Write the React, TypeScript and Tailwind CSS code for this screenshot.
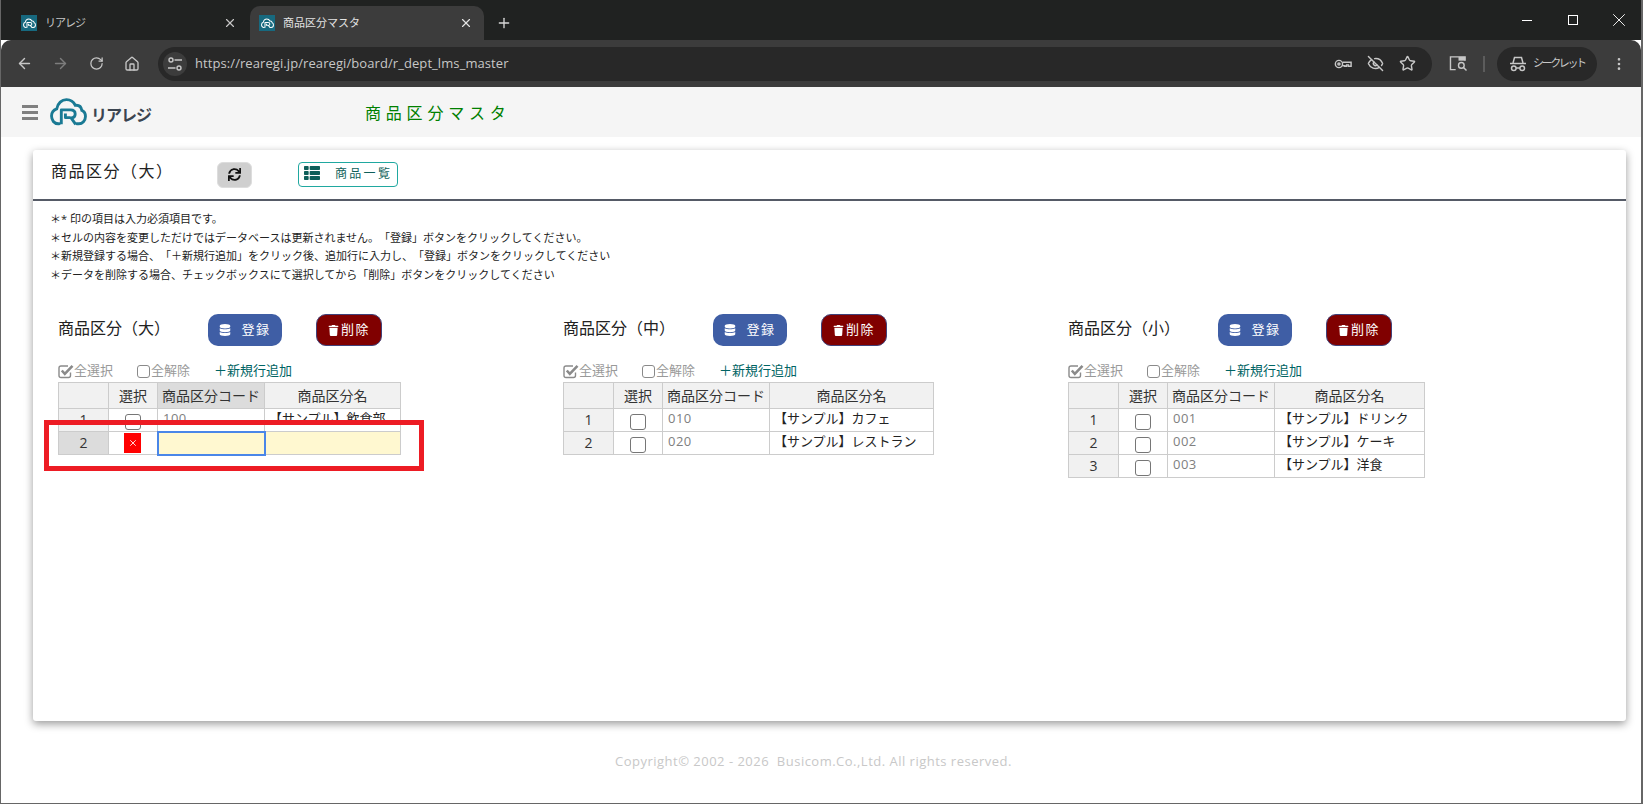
import { ArrowLeft, ArrowRight, RotateCw, Home, EyeOff, Star, EllipsisVertical, Plus, X } from "lucide-react";
import { FaSync, FaThList, FaDatabase, FaTrash } from "react-icons/fa";

const jp = "font-['Open_Sans','Noto_Sans_CJK_JP',sans-serif]";

const CloudMark = ({ className }: { className: string }) => (
  <svg viewBox="0 0 36 28" fill="none" className={className}>
    <path d="M9 25 H8 C4 25 1.500 21.500 1.500 17.500 C1.500 14 3.500 11.500 6.500 10.500 C7.500 5 11.500 1.500 16 1.500 C20 1.500 23 3.500 24.500 7 C28.500 6.500 30.500 9 31 12 C33.500 13 34.500 15.500 34.500 18 C34.500 22 31.500 25 28 25 H26" stroke="currentColor" strokeWidth="2.800" strokeLinecap="round" />
    <path d="M11 25.500 V11.500 H20 C23 11.500 24.500 13.300 24.500 15.500 C24.500 17.800 23 19.200 20.500 19.300 L25 25.500 M15 15 V19 H20" stroke="currentColor" strokeWidth="2.800" strokeLinejoin="round" />
  </svg>
);

const Favicon = () => (
  <div className="flex h-4 w-4 shrink-0 items-center justify-center bg-[#17697f] text-white">
    <CloudMark className="h-[11px] w-[13px]" />
  </div>
);

const TuneIcon = () => (
  <svg viewBox="0 0 16 16" fill="none" stroke="currentColor" strokeWidth="1.400" className="h-4 w-4">
    <circle cx="4" cy="4" r="2" />
    <path d="M7.500 4H15M1 12h7.500" />
    <circle cx="12" cy="12" r="2" />
  </svg>
);

const KeyIcon = () => (
  <svg viewBox="0 0 20 12" fill="none" stroke="currentColor" strokeWidth="1.600" className="h-3 w-[18px]">
    <circle cx="5.500" cy="6" r="4" />
    <circle cx="5.500" cy="6" r="1.200" />
    <path d="M9.500 4h9.500v4.500h-3V7h-2v1.500h-2V8H9.500" />
  </svg>
);

const PanelSearchIcon = () => (
  <svg viewBox="0 0 20 18" fill="none" stroke="currentColor" strokeWidth="1.500" className="h-[17px] w-[19px]">
    <path d="M7 15.500H1.500V2H17V6" />
    <rect x="10" y="2" width="7" height="4" fill="currentColor" stroke="none" />
    <circle cx="13" cy="11" r="3" />
    <path d="M15.300 13.300L18.500 16.500" />
  </svg>
);

const IncognitoIcon = () => (
  <svg viewBox="0 0 18 16" fill="none" stroke="currentColor" strokeWidth="1.500" className="h-4 w-[18px]">
    <path d="M4 7L5.500 1.500H12.500L14 7" />
    <path d="M1 7.500H17" />
    <circle cx="4.800" cy="12.200" r="2.300" />
    <circle cx="13.200" cy="12.200" r="2.300" />
    <path d="M7.100 12H10.900" />
  </svg>
);

const CheckedBox = () => (
  <svg viewBox="0 0 16 15" fill="none" className="h-[15px] w-4 shrink-0 text-[#8a8a8a]">
    <path d="M12.500 8.500V11.500C12.500 12.800 11.800 13.500 10.500 13.500H3C1.700 13.500 1 12.800 1 11.500V4C1 2.700 1.700 2 3 2H10" stroke="currentColor" strokeWidth="1.400" />
    <path d="M3.800 6.500L6.800 9.800L14.500 1.800" stroke="currentColor" strokeWidth="2.600" />
  </svg>
);

const BrowserChrome = () => (
  <div className="shrink-0 text-[#c7c7c7]">
    <div className="flex h-10 items-end bg-[#202221]">
      <div className="flex h-[34px] w-[249px] items-center pl-[20px] pr-[13px]">
        <Favicon />
        <span className="ml-2 text-[11px] tracking-[-1px]">リアレジ</span>
        <X size={14} className="ml-auto" />
      </div>
      <div className="flex h-[34px] w-[234px] items-center rounded-t-[10px] bg-[#3c3c3c] pl-[9px] pr-[11px] text-[#e3e3e3]">
        <Favicon />
        <span className="ml-2 text-[11px]">商品区分マスタ</span>
        <X size={14} className="ml-auto" />
      </div>
      <div className="flex h-[34px] w-10 items-center justify-center">
        <Plus size={16} className="text-[#d8d8d8]" />
      </div>
      <div className="-mr-[1px] ml-auto flex h-10 items-center self-start text-white">
        <div className="flex w-[46px] justify-center"><span className="h-px w-[10px] bg-white" /></div>
        <div className="flex w-[46px] justify-center"><span className="h-[10px] w-[10px] border border-white" /></div>
        <div className="flex w-[46px] justify-center"><X size={22} strokeWidth={1} /></div>
      </div>
    </div>
    <div className="flex h-[47px] items-center rounded-tl-[10px] rounded-tr-[10px] bg-[#3c3c3c] pl-[5px]">
      <div className="flex w-9 justify-center"><ArrowLeft size={17} /></div>
      <div className="flex w-9 justify-center text-[#7d7d7d]"><ArrowRight size={17} /></div>
      <div className="flex w-9 justify-center"><RotateCw size={15} /></div>
      <div className="flex w-9 justify-center"><Home size={16} /></div>
      <div className="ml-2 flex h-[34px] w-[1274px] items-center rounded-full bg-[#282828] pl-[5px] pr-[16px]">
        <div className="flex h-6 w-6 items-center justify-center rounded-full bg-[#3c3c3c]"><TuneIcon /></div>
        <span className="ml-2 text-[13px] tracking-[0.08px]">https://rearegi.jp/rearegi/board/r_dept_lms_master</span>
        <div className="ml-auto flex items-center gap-[15px]">
          <KeyIcon />
          <EyeOff size={17} />
          <Star size={17} />
        </div>
      </div>
      <div className="ml-4 flex w-5 justify-center"><PanelSearchIcon /></div>
      <div className="ml-[15px] h-4 w-[2px] bg-[#5c5c5c]" />
      <div className="ml-3 flex h-[34px] w-[100px] items-center gap-[6px] rounded-full bg-[#282828] pl-[12px]">
        <IncognitoIcon />
        <span className="whitespace-nowrap text-[11px] tracking-[-2.400px]">シークレット</span>
      </div>
      <div className="ml-[12px] flex w-5 justify-center"><EllipsisVertical size={16} /></div>
    </div>
  </div>
);

type Row = { no: number; code: string; name: string };

const Section = ({ label, rows, editing }: { label: string; rows: Row[]; editing?: boolean }) => {
  const cols = label === "大" ? [50, 49, 107, 136] : label === "中" ? [50, 49, 107, 164] : [50, 49, 107, 150];
  return (
    <div className="w-[505px] shrink-0">
      <div className="flex h-8 items-center">
        <h3 className="-mt-[4px] w-[150px] text-base font-normal text-[#222]">商品区分（{label}）</h3>
        <button className="flex h-8 w-[74px] items-center justify-center gap-[10px] rounded-[10px] bg-[#3f5ea5] text-[13px] tracking-[1.500px] text-white">
          <FaDatabase size={12} />
          <span>登録</span>
        </button>
        <button className="ml-[34px] flex h-8 w-[66px] items-center justify-center gap-[2px] rounded-[10px] border border-[#40427a] bg-[#800000] text-[13px] tracking-[1.500px] text-white">
          <FaTrash size={11} />
          <span>削除</span>
        </button>
      </div>
      <div className="mt-[17px] flex h-[16px] items-center text-[13px] text-[#999]">
        <CheckedBox />
        <span className="w-[63px]">全選択</span>
        <span className="h-[13px] w-[13px] shrink-0 rounded-[3px] border-[1.500px] border-[#8a8a8a]" />
        <span className="ml-[1px] w-[63px]">全解除</span>
        <span className="text-[#006464]">＋新規行追加</span>
      </div>
      <table className="mt-[3px] table-fixed border-collapse text-sm text-[#333]">
        <colgroup>
          {cols.map((w, i) => (
            <col key={i} style={{ width: w }} />
          ))}
        </colgroup>
        <thead>
          <tr className="h-[26px] bg-[#f1f1f1]">
            <th className="border border-[#ccc] font-normal"></th>
            <th className="border border-[#ccc] font-normal">選択</th>
            <th className={`whitespace-nowrap border border-[#ccc] font-normal ${editing ? "bg-[#dcdcdc]" : ""}`}>商品区分コード</th>
            <th className="border border-[#ccc] font-normal">商品区分名</th>
          </tr>
        </thead>
        <tbody>
          {rows.map((row) => (
            <tr key={row.no} className="h-[23px]">
              <td className="border border-[#ccc] bg-[#f1f1f1] p-0 pb-px text-center leading-none">{row.no}</td>
              <td className="overflow-hidden border border-[#ccc] p-0"><div className="h-[22px] overflow-hidden"><input type="checkbox" readOnly className="mx-auto mt-[5px] block h-4 w-4 appearance-none rounded-[3px] border border-[#767676] bg-white" /></div></td>
              <td className="border border-[#ccc] p-0 pb-[3px] pl-[5px] text-[13px] leading-none tracking-[0.500px] text-[#808080]">{row.code}</td>
              <td className="whitespace-nowrap border border-[#ccc] p-0 pb-[3px] pl-1 text-[13px] leading-none text-[#222]">{row.name}</td>
            </tr>
          ))}
          {editing && (
            <tr className="h-[23px]">
              <td className="border border-[#ccc] bg-[#dcdcdc] p-0 text-center leading-none">2</td>
              <td className="border border-[#ccc] p-0">
                <div className="mx-auto flex h-[20px] w-[17px] items-center justify-center bg-[#ff0000] text-white"><X size={10} /></div>
              </td>
              <td className="border-2 border-[#4a86e8] bg-[#fff8d0] p-0"></td>
              <td className="border border-[#ccc] bg-[#fff8d0] p-0"></td>
            </tr>
          )}
        </tbody>
      </table>
    </div>
  );
};

export default function App() {
  return (
    <div className={`relative flex h-screen w-full flex-col overflow-hidden border-b border-l border-r-2 border-[#666] bg-white [text-spacing-trim:space-all] ${jp}`}>
      <BrowserChrome />

      {/* page header */}
      <header className="flex h-[50px] shrink-0 items-center bg-[#f5f5f5] pl-[21px]">
        <div className="flex w-4 flex-col gap-[3px]">
          <span className="h-[3px] bg-[#808080]" />
          <span className="h-[3px] bg-[#808080]" />
          <span className="h-[3px] bg-[#808080]" />
        </div>
        <div className="ml-[12px] flex w-[315px] items-center">
          <CloudMark className="h-[29px] w-[37px] text-[#1a7a94]" />
          <span className="ml-[4px] mt-[6px] text-base font-bold leading-none tracking-[-1px] text-[#3b4450]">リアレジ</span>
        </div>
        <h1 className="mt-[2px] text-base font-normal tracking-[4.800px] text-[#008000]">商品区分マスタ</h1>
      </header>

      {/* card */}
      <main className="ml-[32px] mt-[13px] h-[571px] w-[1593px] shrink-0 rounded-[3px] bg-white shadow-[0_3px_8px_rgba(0,0,0,0.4)]">
        <div className="flex h-[51px] items-center border-b-2 border-[#555a66] pl-[18px]">
          <h2 className="-mt-[7px] w-[166px] text-base font-normal tracking-[1.500px] text-[#222]">商品区分（大）</h2>
          <button className="flex h-[26px] w-[35px] items-center justify-center rounded-[6px] border border-[#ddd] bg-[#cfcfcf] text-[#111]">
            <FaSync size={13} />
          </button>
          <button className="ml-[46px] flex h-[25px] w-[100px] items-center rounded-[4px] border border-[#20a8a0] pl-[5px] text-xs tracking-[2.300px] text-[#0f5f5a]">
            <FaThList size={16} className="-mt-[3px]" />
            <span className="ml-[15px] -mt-[1px]">商品一覧</span>
          </button>
        </div>
        <ul className="pl-[17px] pt-[9px] text-[11px] leading-[18.500px] text-[#222]">
          <li>＊* 印の項目は入力必須項目です。</li>
          <li>＊セルの内容を変更しただけではデータベースは更新されません。「登録」ボタンをクリックしてください。</li>
          <li>＊新規登録する場合、「＋新規行追加」をクリック後、追加行に入力し、「登録」ボタンをクリックしてください</li>
          <li>＊データを削除する場合、チェックボックスにて選択してから「削除」ボタンをクリックしてください</li>
        </ul>
        <div className="mt-[30px] flex pl-[25px]">
          <Section label="大" editing rows={[{ no: 1, code: "100", name: "【サンプル】飲食部" }]} />
          <Section label="中" rows={[{ no: 1, code: "010", name: "【サンプル】カフェ" }, { no: 2, code: "020", name: "【サンプル】レストラン" }]} />
          <Section label="小" rows={[{ no: 1, code: "001", name: "【サンプル】ドリンク" }, { no: 2, code: "002", name: "【サンプル】ケーキ" }, { no: 3, code: "003", name: "【サンプル】洋食" }]} />
        </div>
      </main>

      <footer className="mt-[31px] pl-[614px] text-[13px] tracking-[0.490px] text-[#c8c8c8]">Copyright© 2002 - 2026&nbsp; Busicom.Co.,Ltd. All rights reserved.</footer>

      {/* red annotation drawn over the screenshot */}
      <div className="absolute left-[43px] top-[420px] h-[51px] w-[380px] border-[5px] border-[#ed1c24]" />
    </div>
  );
}
